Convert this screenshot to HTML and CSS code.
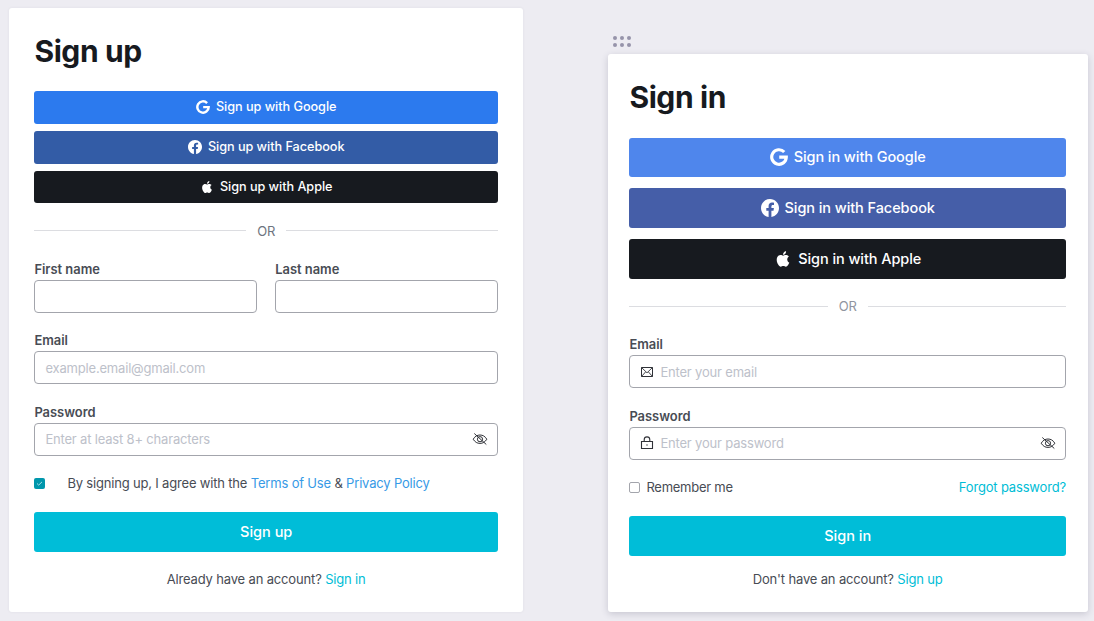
FILE: index.html
```html
<!DOCTYPE html>
<html lang="en">
<head>
<meta charset="utf-8">
<title>Sign up and sign in</title>
<link rel="stylesheet" href="styles.css">
</head>
<body>
<svg class="defs" width="0" height="0" aria-hidden="true">
  <symbol id="google" viewBox="0 0 24 24"><path fill="none" stroke="currentColor" stroke-width="4.200" d="M19 5.300A9.700 9.700 0 1 0 21.700 12.200H12.300"/></symbol>
  <symbol id="facebook" viewBox="0 0 24 24"><path fill="currentColor" d="M24 12.07C24 5.41 18.63 0 12 0S0 5.4 0 12.07C0 18.1 4.39 23.1 10.13 24v-8.44H7.08v-3.49h3.04V9.41c0-3.02 1.8-4.7 4.54-4.7 1.31 0 2.68.24 2.68.24v2.97h-1.5c-1.5 0-1.96.93-1.96 1.89v2.26h3.32l-.53 3.5h-2.8V24C19.62 23.1 24 18.1 24 12.07"/></symbol>
  <symbol id="apple" viewBox="-2 -2 28 28"><path fill="currentColor" d="M12.15 6.9c-.95 0-2.42-1.08-3.96-1.04-2.04.03-3.91 1.18-4.96 3.01-2.12 3.68-.55 9.1 1.52 12.09 1.01 1.45 2.21 3.09 3.79 3.04 1.52-.07 2.09-.99 3.94-.99 1.83 0 2.35.99 3.96.95 1.64-.03 2.68-1.48 3.68-2.95 1.16-1.69 1.64-3.33 1.66-3.42-.04-.01-3.18-1.22-3.22-4.86-.03-3.04 2.48-4.49 2.6-4.56-1.43-2.09-3.62-2.32-4.39-2.38-2-.15-3.68 1.09-4.61 1.09zM15.53 3.83c.84-1.01 1.4-2.43 1.25-3.83-1.21.05-2.66.8-3.53 1.82-.78.9-1.45 2.34-1.27 3.71 1.34.1 2.72-.69 3.56-1.7"/></symbol>
  <symbol id="eye-off" viewBox="0 0 16 14"><g fill="none" stroke="currentColor" stroke-width="1"><path d="M1.200 7.200C3 4.200 5.300 3 8 3s5 1.200 6.800 4.200C13 10.200 10.700 11.400 8 11.400S3 10.200 1.200 7.200z"/><circle cx="8" cy="7.200" r="2.600"/><path d="M2.300 1.500l12 11"/></g></symbol>
  <symbol id="mail" viewBox="0 0 14 14"><path fill="none" stroke="currentColor" stroke-width="1" d="M1.500 2.500h11v9h-11z"/><path fill="none" stroke="currentColor" stroke-width=".9" d="M1.500 2.500L7 7.800l5.500-5.300M1.500 11.500l4-4.500M12.500 11.500L8.500 7"/></symbol>
  <symbol id="lock" viewBox="0 0 14 14"><path fill="none" stroke="currentColor" stroke-width="1.100" d="M1.500 5.500h11v7h-11zM4.200 5.500V3.700a2.800 2.800 0 0 1 5.600 0v1.800"/><circle fill="currentColor" cx="7" cy="9" r=".7"/></symbol>
</svg>
<main class="canvas">
  <section class="card card-signup">
    <h1 class="title">Sign up</h1>
    <div class="providers">
      <button class="provider google"><svg class="brand"><use href="#google"/></svg><span>Sign up with Google</span></button>
      <button class="provider facebook"><svg class="brand"><use href="#facebook"/></svg><span>Sign up with Facebook</span></button>
      <button class="provider apple"><svg class="brand"><use href="#apple"/></svg><span>Sign up with Apple</span></button>
    </div>
    <div class="divider"><span>OR</span></div>
    <div class="names">
      <div class="field"><label class="label">First name</label><div class="input"></div></div>
      <div class="field"><label class="label">Last name</label><div class="input"></div></div>
    </div>
    <div class="field"><label class="label">Email</label><div class="input"><span class="placeholder">example.email@gmail.com</span></div></div>
    <div class="field"><label class="label">Password</label><div class="input"><span class="placeholder">Enter at least 8+ characters</span><svg class="eye"><use href="#eye-off"/></svg></div></div>
    <div class="options">
      <span class="check checked"><svg viewBox="0 0 11 11"><path d="M3 5.500l1.700 1.600L8 3.900"/></svg></span>
      <span class="terms">By signing up, I agree with the <a class="blue">Terms of Use</a> &amp; <a class="blue">Privacy Policy</a></span>
    </div>
    <button class="submit">Sign up</button>
    <p class="footer">Already have an account? <a class="cyan">Sign in</a></p>
  </section>

  <div class="frame">
    <div class="handle"><i></i><i></i><i></i><i></i><i></i><i></i></div>
    <section class="card card-signin">
      <h1 class="title">Sign in</h1>
      <div class="providers">
        <button class="provider google"><svg class="brand"><use href="#google"/></svg><span>Sign in with Google</span></button>
        <button class="provider facebook"><svg class="brand"><use href="#facebook"/></svg><span>Sign in with Facebook</span></button>
        <button class="provider apple"><svg class="brand"><use href="#apple"/></svg><span>Sign in with Apple</span></button>
      </div>
      <div class="divider"><span>OR</span></div>
      <div class="field"><label class="label">Email</label><div class="input"><svg class="lead"><use href="#mail"/></svg><span class="placeholder">Enter your email</span></div></div>
      <div class="field"><label class="label">Password</label><div class="input"><svg class="lead"><use href="#lock"/></svg><span class="placeholder">Enter your password</span><svg class="eye"><use href="#eye-off"/></svg></div></div>
      <div class="options">
        <span class="check"></span><span class="remember">Remember me</span><a class="cyan forgot">Forgot password?</a>
      </div>
      <button class="submit">Sign in</button>
      <p class="footer">Don't have an account? <a class="cyan">Sign up</a></p>
    </section>
  </div>
</main>
</body>
</html>
```
FILE: styles.css
```css
* { box-sizing: border-box; }
body {
  margin: 0;
  height: 621px;
  overflow: hidden;
  background: #edecf2;
  color: #484c54;
  font: 13px/20px Inter, "Liberation Sans", sans-serif;
  letter-spacing: -.16px;
}
.defs { position: absolute; }
.canvas { display: flex; padding: 8px 6px 0 9.400px; justify-content: space-between; }
.card { background: #fff; border-radius: 3px; display: flex; flex-direction: column; }
.card-signup { width: 514px; height: 603.500px; padding: 23px 25.400px 0 25px; box-shadow: 0 0 3px rgba(60, 60, 90, .07); }
.frame { width: 480px; padding-top: 28px; }
.handle { display: grid; grid-template-columns: repeat(3, 4px); gap: 3px; margin-left: 4.500px; height: 18px; align-content: start; }
.handle i { width: 4px; height: 4px; border-radius: 50%; background: #9694aa; }
.card-signin { height: 558px; padding: 23px 22px 0 21.400px; box-shadow: 0 2px 7px rgba(50, 50, 80, .2); }
.title { margin: 0; height: 40px; font-size: 30px; line-height: 40px; font-weight: 650; letter-spacing: -.4px; color: #171a1f; }
button { border: 0; padding: 0; font: inherit; letter-spacing: 0; color: #fff; border-radius: 3px; }
.providers { display: flex; flex-direction: column; gap: 7px; margin-top: 20px; }
.provider { height: 32.800px; display: flex; align-items: center; justify-content: center; gap: 6px; font-weight: 500; font-size: 12.700px; letter-spacing: -.05px; }
.google { background: #2c7aee; }
.facebook { background: #335ca6; }
.apple { background: #171a1f; }
.brand { width: 14px; height: 14px; }
.card-signin .providers { gap: 11px; margin-top: 20.500px; }
.card-signin .provider { height: 39.800px; font-size: 14.500px; letter-spacing: -.08px; }
.card-signin .google { background: #4f86ec; }
.card-signin .facebook { background: #455ea8; }
.card-signin .brand { width: 18px; height: 18px; }
.divider { display: flex; align-items: center; gap: 11px; height: 20px; margin: 17.600px 0 17.900px; color: #6e7480; }
.divider::before, .divider::after { content: ""; flex: 1; height: 1px; background: #dcdde1; }
.card-signin .divider { margin: 17.200px 0 18.300px; color: #9095a0; }
.names { display: grid; grid-template-columns: 1fr 1fr; gap: 18px; }
.field { display: flex; flex-direction: column; margin-bottom: 17.500px; }
.label { height: 21px; line-height: 21px; font-weight: 600; font-size: 12.900px; letter-spacing: 0; }
.input { height: 33px; border: 1px solid #a3a5ac; border-radius: 4px; display: flex; align-items: center; padding: 0 9px 0 10px; }
.placeholder { flex: 1; color: #bdc1ca; letter-spacing: -.18px; }
.eye { width: 16px; height: 14px; color: #303238; }
.lead { width: 14px; height: 14px; margin: 0 6px 0 0; color: #303238; }
.options { display: flex; align-items: center; height: 20px; }
.check { width: 11px; height: 11px; border: 1px solid #a3a5ac; border-radius: 2px; display: flex; }
.checked { border: 0; background: #0097ac; margin-right: 22px; }
.checked svg { width: 11px; height: 11px; fill: none; stroke: #a9e0e8; stroke-width: 1; }
.terms { letter-spacing: -.18px; }
.remember { margin-left: 6px; letter-spacing: -.25px; }
.forgot { margin-left: auto; letter-spacing: -.17px; }
.blue { color: #379ae6; }
.cyan { color: #00bdd6; }
.submit { height: 40px; margin-top: 18.200px; background: #00bdd8; font-weight: 500; font-size: 14.500px; }
.footer { margin: 17.200px 0 0; text-align: center; }
.card-signin .footer { margin-top: 13.500px; }
```
